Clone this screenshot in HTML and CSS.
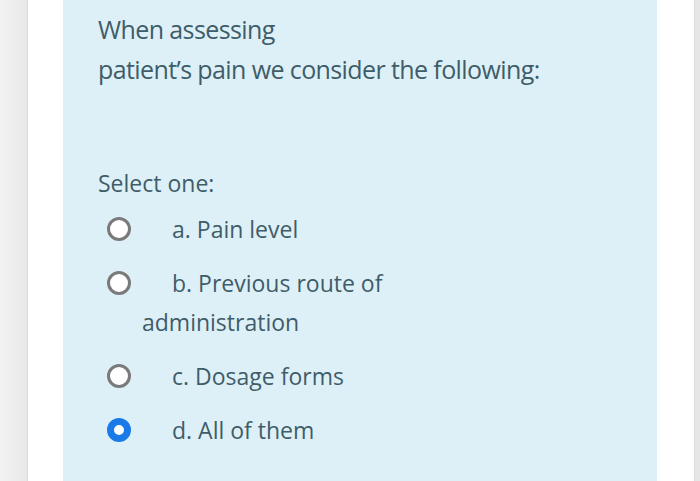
FILE: index.html
```html
<!DOCTYPE html>
<html>
<head>
<meta charset="utf-8">
<link rel="stylesheet" href="styles.css">
</head>
<body>
<div class="gutter"></div>
<div class="page">
  <div class="card">
    <p class="qtext">When assessing<br>patient’s pain we consider the following:</p>
    <p class="prompt">Select one:</p>
    <div class="answers">
      <div class="option"><span class="radio"></span><span class="label">a. Pain level</span></div>
      <div class="option"><span class="radio"></span><span class="label">b. Previous route of administration</span></div>
      <div class="option"><span class="radio"></span><span class="label">c. Dosage forms</span></div>
      <div class="option"><span class="radio checked"></span><span class="label">d. All of them</span></div>
    </div>
  </div>
</div>
<div class="edge"></div>
</body>
</html>
```

FILE: styles.css
```css
html, body {
  margin: 0;
  height: 481px;
  overflow: hidden;
}
body {
  display: flex;
  background: #ffffff;
  font-family: "Open Sans", "Noto Sans", sans-serif;
  color: #3e5d69;
}
.gutter {
  width: 27px;
  background: linear-gradient(to right, #f2f2f2, #e9e9e9);
  border-right: 1px solid #d9d9d9;
}
.page {
  flex: 1;
  padding: 0 37px 0 35px;
}
.card {
  background: #def0f7;
  height: 100%;
  padding: 9px 35px 0;
  box-sizing: border-box;
}
.edge {
  width: 5px;
  background: #e6e6e6;
  border-left: 1px solid #dcdcdc;
}
.qtext {
  margin: 0;
  font-size: 25px;
  line-height: 40px;
  letter-spacing: -0.6px;
}
.prompt {
  margin: 74px 0 0;
  font-size: 23px;
  line-height: 40px;
}
.answers {
  margin-top: 7px;
}
.option {
  padding-left: 44px;
  width: 300px;
  font-size: 23px;
  line-height: 39px;
  margin-bottom: 15px;
}
.radio {
  display: inline-block;
  width: 18px;
  height: 18px;
  border: 3px solid #7a7a7a;
  border-radius: 50%;
  background: #fff;
  margin-left: -35px;
  margin-right: 41px;
  vertical-align: -3px;
}
.radio.checked {
  width: 10px;
  height: 10px;
  border: 7px solid #1a7ae8;
}
```
